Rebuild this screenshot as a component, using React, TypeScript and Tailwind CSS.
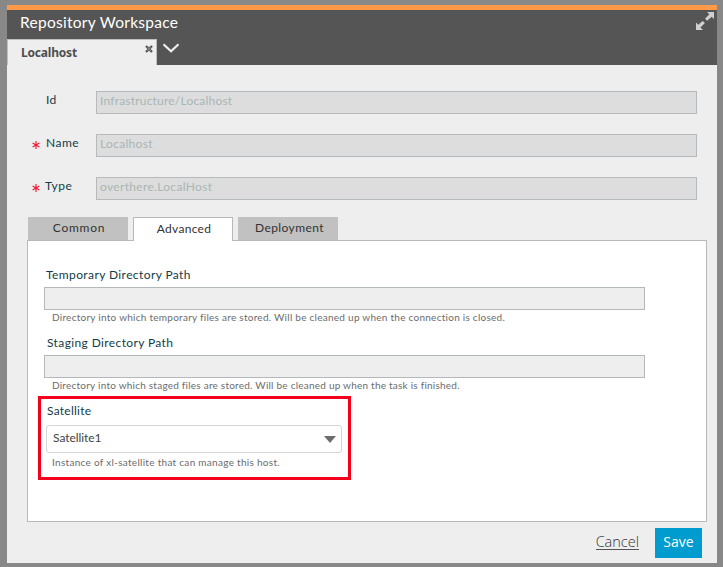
import React from "react";

const label = "font-['Lato','Noto_Sans',sans-serif] text-[12px] leading-[16px] text-[#123c46] whitespace-nowrap";
const hint = "pl-2 pt-[2px] h-[15px] text-[10px] leading-[11px] text-[#6c6c6c] whitespace-nowrap";

function Field({ name, value, required, className, valueClass }: { name: string; value: string; required?: boolean; className: string; valueClass: string }) {
  return (
    <div className="flex h-[23px]">
      <div className="w-[25px] pl-[25px] text-[#f0142d]">
        {required && (
          <svg className="mt-[7px] h-[8px] w-[8px]" viewBox="0 0 8 8" fill="none" stroke="currentColor" strokeWidth="1.1">
            <path d="M4 0v8M.6 2l6.8 4M7.4 2L.6 6" />
          </svg>
        )}
      </div>
      <div className={`w-[64px] pl-[14px] pt-[1px] ${label} ${className}`}>{name}</div>
      <div className={`h-[23px] w-[601px] border border-[#b7babd] bg-[#dddddd] pl-[3px] pt-[1px] text-[12px] leading-[15px] text-[#a9b6b5] ${valueClass}`}>
        {value}
      </div>
    </div>
  );
}

export default function App() {
  return (
    <div className="h-[567px] w-[723px] bg-[#888888] pl-[7px] pr-[6px] pt-[5px] pb-[4px] font-['Lato','Noto_Sans',sans-serif]">
      <div className="flex h-[558px] w-[710px] flex-col bg-[#eeeeee]">
        <header className="h-[60px] border-t-[5px] border-[#ff9a4a] bg-[#555555]">
          <div className="flex h-[29px] justify-between pl-[13px] pr-[3px]">
            <h1 className="pt-[2px] text-[15.5px] leading-[21px] tracking-[0.28px] text-white">Repository Workspace</h1>
            <svg className="mt-[2px] h-[18px] w-[18px]" viewBox="0 0 18 18" fill="#d0d0d0">
              <path d="M11 0h7v7l-2.3-2.3-4.6 4.1-2.1-2.1 4.4-4.4zM0 10.6l2.2 2.2L6.7 9l2.2 2.1-4.4 4.4L7 18H0z" />
            </svg>
          </div>
          <div className="flex h-[26px]">
            <div className="flex w-[150px] justify-between border-t border-r border-l border-[#bfbfbf] bg-[#eeeeee] pl-[13px] pr-[3px]">
              <span className="pt-[4px] font-['Noto_Sans',sans-serif] text-[12px] font-bold leading-[17px] tracking-[-0.2px] text-[#4e4e4e]">Localhost</span>
              <svg className="mt-[5px] h-[8px] w-[8px]" viewBox="0 0 8 8" fill="none">
                <path d="M1 1l6 6M7 1L1 7" stroke="#555" strokeWidth="2.4" />
                <path d="M2 2l4 4M6 2L2 6" stroke="#999" strokeWidth=".7" />
              </svg>
            </div>
            <svg className="ml-[6px] mt-[4px] h-[11px] w-[16px]" viewBox="0 0 16 11" fill="none" stroke="#eeeeee" strokeWidth="2.2">
              <path d="M.5 1.2L8 8.3l7.5-7.1" />
            </svg>
          </div>
        </header>

        <div className="flex flex-col gap-5 pt-[26px]">
          <Field name="Id" value="Infrastructure/Localhost" className="tracking-[0.3px]" valueClass="tracking-[0.2px]" />
          <Field name="Name" value="Localhost" required className="tracking-[0.5px]" valueClass="tracking-[0.3px]" />
          <Field name="Type" value="overthere.LocalHost" required className="-ml-px mr-px tracking-[0.5px]" valueClass="tracking-[0.32px]" />
        </div>

        <nav className="z-10 ml-[21px] mt-[17px] flex h-[23px] gap-[5px] text-[12px] leading-[16px] text-[#333]">
          <div className="w-[100px] bg-[#c1c1c1] pl-[2px] pt-[3px] text-center tracking-[0.75px]">Common</div>
          <div className="h-[24px] w-[100px] border border-b-0 border-[#b9b9b9] bg-white pl-[2px] pt-[3px] text-center tracking-[0.3px]">Advanced</div>
          <div className="w-[100px] bg-[#c1c1c1] pl-[3px] pt-[3px] text-center tracking-[0.4px]">Deployment</div>
        </nav>

        <main className="ml-[20px] h-[282px] w-[680px] border border-[#b9b9b9] bg-white pl-[16px] pt-[26px]">
          <div className={`pl-[2px] tracking-[0.4px] ${label}`}>Temporary Directory Path</div>
          <div className="mt-[4px] h-[23px] w-[601px] border border-[#b5b8bb] bg-[#eeeeee]" />
          <div className={`tracking-[0.26px] ${hint}`}>Directory into which temporary files are stored. Will be cleaned up when the connection is closed.</div>
          <div className={`mt-[10px] pl-[3px] tracking-[0.38px] ${label}`}>Staging Directory Path</div>
          <div className="mt-[4px] h-[23px] w-[601px] border border-[#b5b8bb] bg-[#eeeeee]" />
          <div className={`tracking-[0.23px] ${hint}`}>Directory into which staged files are stored. Will be cleaned up when the task is finished.</div>

          <section className="-ml-[6px] mt-[3px] h-[84px] w-[313px] border-[3px] border-[#f5001c] pl-[5px] pt-[4px]">
            <div className={`pl-px tracking-[0.25px] ${label}`}>Satellite</div>
            <div className="mt-[6px] flex h-[28px] w-[296px] items-center justify-between rounded-[3px] border border-[#d5d5d5] pl-[6px] pr-[5px]">
              <span className="-mt-[2px] text-[12px] leading-[16px] tracking-[-0.05px] text-[#444]">Satellite1</span>
              <svg className="h-[7px] w-[12px]" viewBox="0 0 12 7" fill="#6d6d6d"><path d="M0 0h12L6 7z" /></svg>
            </div>
            <div className="pl-[6px] pt-[4px] text-[10px] leading-[11px] tracking-[0.29px] text-[#6c6c6c]">Instance of xl-satellite that can manage this host.</div>
          </section>
        </main>

        <footer className="flex h-[36px] justify-end pr-[15px] pt-[6px] font-['Open_Sans',sans-serif] text-[14.5px] font-light leading-[20px]">
          <div className="mr-[16px] mt-[4px] h-[18px] border-b border-[#555] leading-[19px] text-[#333]">Cancel</div>
          <div className="h-[30px] w-[47px] bg-[#009ccf] pt-[4px] text-center font-normal text-[14px] text-white">Save</div>
        </footer>
      </div>
    </div>
  );
}
